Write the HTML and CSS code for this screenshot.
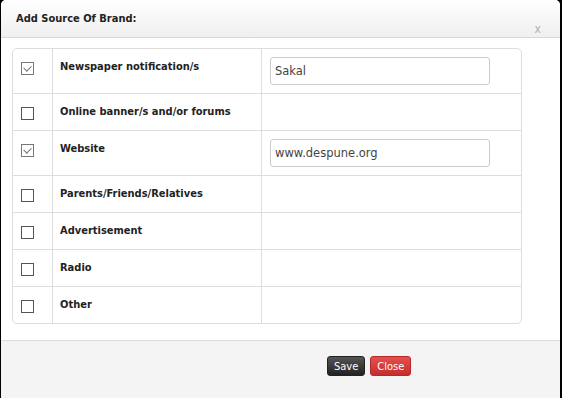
FILE: index.html
```html
<!DOCTYPE html>
<html lang="en">
<head>
    <meta charset="UTF-8">
    <title>Add Source Of Brand</title>
    <link rel="stylesheet" href="styles.css">
</head>
<body>
    <div class="modal">
        <div class="modal-header">
            <h3>Add Source Of Brand:</h3>
            <span class="close-x">x</span>
        </div>

        <div class="modal-body">
            <table class="source-table">
                <tr>
                    <td class="check-cell"><span class="check checked"></span></td>
                    <td class="label-cell">Newspaper notification/s</td>
                    <td class="input-cell"><input type="text" value="Sakal"></td>
                </tr>
                <tr>
                    <td class="check-cell"><span class="check"></span></td>
                    <td class="label-cell">Online banner/s and/or forums</td>
                    <td class="input-cell"></td>
                </tr>
                <tr>
                    <td class="check-cell"><span class="check checked"></span></td>
                    <td class="label-cell">Website</td>
                    <td class="input-cell"><input type="text" value="www.despune.org"></td>
                </tr>
                <tr>
                    <td class="check-cell"><span class="check"></span></td>
                    <td class="label-cell">Parents/Friends/Relatives</td>
                    <td class="input-cell"></td>
                </tr>
                <tr>
                    <td class="check-cell"><span class="check"></span></td>
                    <td class="label-cell">Advertisement</td>
                    <td class="input-cell"></td>
                </tr>
                <tr>
                    <td class="check-cell"><span class="check"></span></td>
                    <td class="label-cell">Radio</td>
                    <td class="input-cell"></td>
                </tr>
                <tr>
                    <td class="check-cell"><span class="check"></span></td>
                    <td class="label-cell">Other</td>
                    <td class="input-cell"></td>
                </tr>
            </table>
        </div>

        <div class="modal-footer">
            <button class="btn btn-dark">Save</button>
            <button class="btn btn-red">Close</button>
        </div>
    </div>
</body>
</html>
```

FILE: styles.css
```css
* {
    box-sizing: border-box;
    margin: 0;
    padding: 0;
}

body {
    background: #000;
    font-family: "DejaVu Sans Condensed", "DejaVu Sans", Verdana, sans-serif;
    font-size: 11px;
    color: #333;
}

.modal {
    display: flex;
    flex-direction: column;
    height: 398px;
    margin: 0 2px 0 1px;
    background: #fff;
    border-radius: 5px 5px 0 0;
    overflow: hidden;
}

.modal-header {
    display: flex;
    justify-content: space-between;
    height: 38px;
    padding: 12px 19px 0 15px;
    background: linear-gradient(#fff, #efefef);
    border-bottom: 1px solid #d8d8d8;
}

.modal-header h3 {
    font-size: 11px;
    font-weight: bold;
    color: #222;
}

.close-x {
    margin-top: 10px;
    font-size: 12px;
    color: #b0b0b0;
}

.modal-body {
    padding: 10px 38px 16px 11px;
}

.source-table {
    width: 100%;
    border-collapse: separate;
    border-spacing: 0;
    border: 1px solid #ddd;
    border-radius: 5px;
}

.source-table td {
    vertical-align: top;
    border-left: 1px solid #ddd;
    border-top: 1px solid #ddd;
}

.source-table td:first-child {
    border-left: none;
}

.source-table tr:first-child td {
    border-top: none;
}

.check-cell {
    width: 39px;
    padding: 13px 0 0 8px;
    height: 37px;
}

.label-cell {
    width: 209px;
    padding: 11px 7px 0;
    font-weight: bold;
    color: #222;
}

.input-cell {
    padding: 8px 8px;
}

.input-cell input {
    display: block;
    width: 220px;
    height: 28px;
    padding: 0 4px;
    font-family: "DejaVu Sans", Verdana, sans-serif;
    font-size: 11.5px;
    color: #444;
    border: 1px solid #ccc;
    border-radius: 3px;
}

.check {
    display: block;
    width: 13px;
    height: 13px;
    border: 1px solid #555;
    background: #fff;
}

.check.checked {
    border-color: #777;
    position: relative;
}

.check.checked::after {
    content: '';
    position: absolute;
    left: 2px;
    top: 1px;
    width: 6px;
    height: 4px;
    border-left: 1px solid #777;
    border-bottom: 1px solid #777;
    transform: rotate(-45deg);
    transform-origin: center;
    margin-top: 1px;
}

.modal-footer {
    flex: 1;
    display: flex;
    align-items: flex-start;
    gap: 5px;
    padding: 15px 0 0 326px;
    background: #f4f4f4;
    border-top: 1px solid #ddd;
}

.btn {
    height: 20px;
    padding: 0 6px;
    font-family: "DejaVu Sans Condensed", "DejaVu Sans", Verdana, sans-serif;
    font-size: 11px;
    color: #fff;
    border-radius: 3px;
    cursor: pointer;
}

.btn-dark {
    background: linear-gradient(#555, #222);
    border: 1px solid #222;
}

.btn-red {
    background: linear-gradient(#e5504f, #c52d2b);
    border: 1px solid #b52a28;
}
```
